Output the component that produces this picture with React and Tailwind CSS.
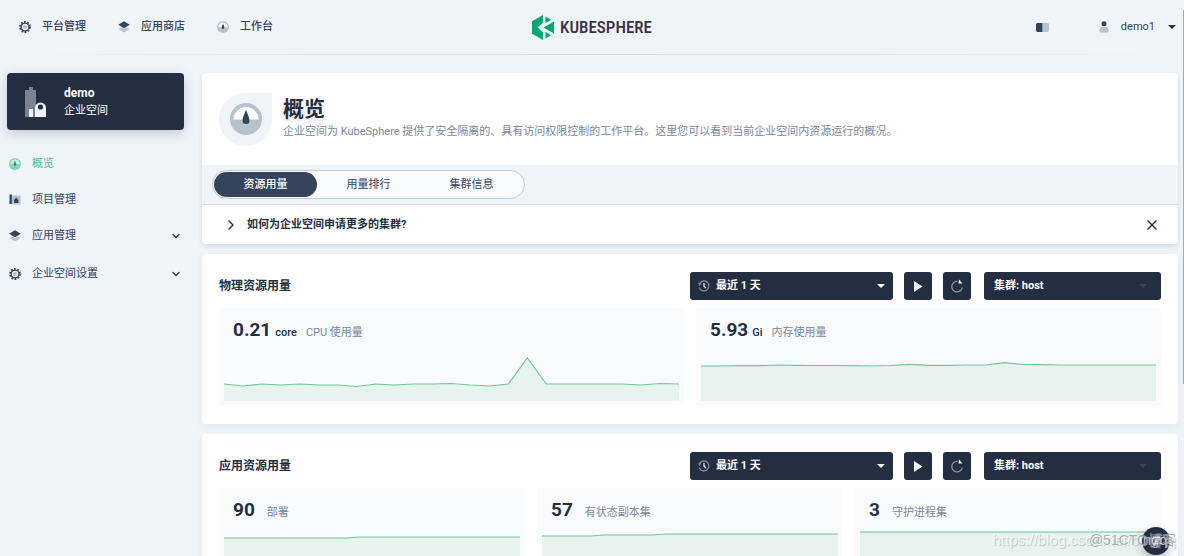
import { useState } from "react";
import clsx from "clsx";
import { ChevronDown, ChevronRight, X } from "lucide-react";

const cpuUsage = [17, 15, 17, 16, 17, 16, 16, 14.5, 17, 16, 17, 17, 17.5, 16, 15, 17, 43, 17, 17, 17, 17, 17, 16, 17.5, 17];
const memoryUsage = [35, 35, 35.3, 35.3, 36, 35.7, 35.5, 35.5, 35.3, 35, 35.5, 36.7, 35.7, 35.7, 36, 36, 38.3, 36.5, 36.3, 36, 36, 36, 36, 36, 36];
const deployments = [43, 43, 43, 43, 43, 43, 43, 43, 43, 43, 43, 44, 44, 44, 44, 44, 44, 44, 44, 44, 44, 44, 44, 44, 44];
const statefulSets = [45, 45, 45, 45, 45, 46, 46, 46, 46, 46, 47, 47, 47, 47, 47, 47, 47, 47, 47, 47, 47, 47, 47, 47, 47];
const daemonSets = [49, 49, 49, 49, 49, 49, 49, 49, 49, 49, 49, 49, 49, 49, 49, 49, 49, 49, 49, 49, 49, 49, 49, 49, 49];

const tabs = ["资源用量", "用量排行", "集群信息"];

function GearIcon() {
  return (
    <svg viewBox="0 0 12 12" className="size-3 shrink-0">
      <circle cx="6" cy="6" r="5" fill="none" stroke="#324558" strokeWidth="1.8" strokeDasharray="1.8 1.34" />
      <circle cx="6" cy="6" r="3.9" fill="#eff4f9" stroke="#324558" strokeWidth="1.3" />
      <circle cx="6" cy="6" r="1.9" fill="#b6c2cd" />
    </svg>
  );
}

function LayersIcon() {
  return (
    <svg viewBox="0 0 12 12" className="size-3 shrink-0">
      <path d="M0.4 8 3.2 6.5 6 8 8.800 6.500 11.600 8 6 11.400Z" fill="#b6c2cd" />
      <path d="M6 0.300 11.800 3.700 6 7.200 0.200 3.700Z" fill="#324558" />
    </svg>
  );
}

function GaugeIcon({ className, ring = "#b6c2cd", needle = "#324558", face = "#fff" }) {
  return (
    <svg viewBox="0 0 32 32" className={className}>
      <circle cx="16" cy="16" r="16" fill={ring} />
      <path d="M3.500 16.500a12.500 12.500 0 0 1 25 0Z" fill={face} />
      <path d="M16 6.500c.9 3.600 3.500 7.500 3.500 11a3.500 3.500 0 0 1-7 0c0-3.500 2.600-7.400 3.500-11Z" fill={needle} />
    </svg>
  );
}

function ProjectIcon() {
  return (
    <svg viewBox="0 0 12 12" className="size-3 shrink-0">
      <path d="M2.500 1.500h9v9h-9z" fill="#b6c2cd" />
      <path d="M0.500 0.500h2.300v9.500h-2.300z" fill="#324558" />
      <path d="M5 9V6l2.200-2.500L9.400 6v3z" fill="#324558" />
    </svg>
  );
}

function WorkspaceIcon() {
  return (
    <svg viewBox="0 0 22 30" className="h-[30px] w-[22px] shrink-0">
      <path d="M4 0h4v3h3v27H0V3h4z" fill="#7c828e" />
      <path d="M10 30V21a5.500 5.500 0 0 1 11 0v9z" fill="#eff4f9" />
      <path d="M4 22h4v8H4z" fill="#eff4f9" />
      <circle cx="15.500" cy="20" r="2.600" fill="#242e42" />
    </svg>
  );
}

function Logo() {
  return (
    <a href="#" className="flex items-center gap-[6px]">
      <svg viewBox="0 0 22 25" className="h-[25px] w-[22px]">
        <path d="M11 0v7.800L5.500 12.500 11 17.200V25L0 18.700V6.300Z" fill="#00a971" />
        <path d="M13.500 1.500 19 4.700 13.500 8.200Z" fill="#00a971" />
        <path d="M13.500 16.800 19 20.300 13.500 23.500Z" fill="#00a971" />
        <path d="M22 6.500v12L11.500 12.500Z" fill="#00a971" />
      </svg>
      <span className="font-['Liberation_Sans_Narrow','Roboto_Condensed',Roboto,sans-serif] text-[17px] leading-5 font-medium text-[#3a3048]">
        KUBESPHERE
      </span>
    </a>
  );
}

function Caret({ className }) {
  return (
    <svg viewBox="0 0 8 4" className={clsx("h-1 w-2", className)}>
      <path d="M0 0h8L4 4z" fill="currentColor" />
    </svg>
  );
}

function Header() {
  return (
    <header>
      <div className="grid h-[54px] grid-cols-[1fr_auto_1fr] items-center">
        <nav className="flex items-center gap-8 pl-[19px] font-medium">
          <a href="#" className="flex items-center gap-[11px]"><GearIcon />平台管理</a>
          <a href="#" className="flex items-center gap-[11px]"><LayersIcon />应用商店</a>
          <a href="#" className="flex items-center gap-[11px]"><GaugeIcon className="size-3" />工作台</a>
        </nav>
        <Logo />
        <div className="flex items-center justify-end pr-2">
          <button type="button" aria-label="文档" className="mr-[50px]">
            <svg viewBox="0 0 13 9" className="h-[9px] w-[13px]">
              <path d="M0 1l1-1h5.500v9H1L0 8z" fill="#324558" />
              <path d="M7 0h5l1 1v7l-1 1H7z" fill="#b6c2cd" />
            </svg>
          </button>
          <button type="button" className="flex items-center">
            <svg viewBox="0 0 10 12" className="mr-3 h-3 w-[10px]">
              <path d="M0.500 10V9c0-2 1.500-3 3-3h3c1.500 0 3 1 3 3v1c0 1-1 1.500-1.500 1.500h-6C1 11.500.500 11 .500 10Z" fill="#b6c2cd" />
              <circle cx="5" cy="2.800" r="2.500" fill="#324558" />
            </svg>
            demo1
            <Caret className="ml-[13px] text-[#242e42]" />
          </button>
        </div>
      </div>
      <div className="h-px bg-linear-to-r from-transparent via-[#d5dbe2] to-transparent" />
    </header>
  );
}

function Sidebar() {
  return (
    <aside className="w-[177px] shrink-0">
      <div className="flex h-[57px] items-center gap-[17px] rounded-sm bg-[#242e42] pl-[18px] text-white shadow-[0_4px_12px_rgba(36,46,66,0.2)]">
        <WorkspaceIcon />
        <div>
          <p className="text-[12px] leading-[18px] font-bold">demo</p>
          <p className="leading-[18px]">企业空间</p>
        </div>
      </div>
      <ul className="mt-4">
        <li>
          <a href="#" className="flex h-9 items-center gap-[11px] pl-[2px] text-[#55bc8a]">
            <GaugeIcon className="size-3" ring="#7fd6b0" needle="#00aa72" face="#c9eedd" />
            概览
          </a>
        </li>
        <li>
          <a href="#" className="flex h-9 items-center gap-[11px] pl-[2px]"><ProjectIcon />项目管理</a>
        </li>
        <li className="mb-[2px]">
          <button type="button" className="flex h-9 w-full items-center gap-[11px] pr-[2px] pl-[2px]">
            <LayersIcon />
            应用管理
            <ChevronDown className="ml-auto size-3" strokeWidth={3} />
          </button>
        </li>
        <li>
          <button type="button" className="flex h-9 w-full items-center gap-[11px] pr-[2px] pl-[2px]">
            <GearIcon />
            企业空间设置
            <ChevronDown className="ml-auto size-3" strokeWidth={3} />
          </button>
        </li>
      </ul>
    </aside>
  );
}

function Banner() {
  const [activeTab, setActiveTab] = useState("资源用量");
  const [showTip, setShowTip] = useState(true);

  return (
    <section className="overflow-hidden rounded bg-white shadow-[0_2px_4px_rgba(36,46,66,0.14)]">
      <div className="flex h-[92px] items-center gap-[11px] px-[17px]">
        <div className="flex size-[53px] shrink-0 items-center justify-center rounded-full rounded-tr-none bg-[#eff4f9]">
          <GaugeIcon className="size-8" />
        </div>
        <div className="pb-[2px]">
          <h1 className="text-[21px] leading-7 font-bold text-[#242e42] text-shadow-[0_3px_4px_rgba(36,46,66,0.16)]">概览</h1>
          <p className="leading-[18px] text-[#79879c]">
            企业空间为 KubeSphere 提供了安全隔离的、具有访问权限控制的工作平台。这里您可以看到当前企业空间内资源运行的概况。
          </p>
        </div>
      </div>
      <div className="border-b border-[#d8dfe8] bg-[#eff4f9] px-[10px] py-[5px]">
        <div className="inline-flex rounded-full border border-[#c1c9d1] bg-[#f9fbfd] p-px align-top">
          {tabs.map((tab) => (
            <button
              key={tab}
              type="button"
              onClick={() => setActiveTab(tab)}
              className={clsx(
                "h-[25px] w-[103px] rounded-full",
                activeTab === tab && "bg-[#36435c] font-medium text-white"
              )}
            >
              {tab}
            </button>
          ))}
        </div>
      </div>
      {showTip && (
        <div className="flex h-[39px] items-center justify-between pr-[18px] pl-[21px] text-[#242e42]">
          <button type="button" className="flex items-center gap-2 font-bold">
            <ChevronRight className="size-4" />
            如何为企业空间申请更多的集群?
          </button>
          <button type="button" aria-label="关闭" onClick={() => setShowTip(false)}>
            <X className="size-4" />
          </button>
        </div>
      )}
    </section>
  );
}

function Toolbar() {
  return (
    <div className="flex items-center gap-[11px] text-white">
      <div className="relative">
        <svg viewBox="0 0 12 12" className="pointer-events-none absolute top-2 left-2 size-3" fill="none">
          <path d="M1.300 4A5 5 0 1 1 1.200 7.600" stroke="#8c929d" strokeWidth="1.200" />
          <path d="M0 3.300h3.200L1.500 6z" fill="#8c929d" />
          <path d="M6 3v3.200l2 1.800" stroke="#fff" strokeWidth="1.200" />
        </svg>
        <select aria-label="时间范围" className="h-7 w-[203px] appearance-none rounded-[3px] bg-[#242e42] pl-[26px] font-bold">
          <option>最近 1 天</option>
        </select>
        <Caret className="pointer-events-none absolute top-3 right-2" />
      </div>
      <button type="button" aria-label="开始" className="flex size-7 items-center justify-center rounded-[3px] bg-[#242e42]">
        <svg viewBox="0 0 10 12" className="h-3 w-[10px]">
          <path d="M1 1v11l8.500-5.500z" fill="#eff4f9" />
        </svg>
      </button>
      <button type="button" aria-label="刷新" className="flex size-7 items-center justify-center rounded-[3px] bg-[#242e42]">
        <svg viewBox="0 0 14 14" className="size-[14px]" fill="none">
          <path d="M7.500 2.300A5.300 5.300 0 1 0 12.300 8.500" stroke="#8c929d" strokeWidth="1.300" />
          <path d="M9 0.500 12.500 4.500H8.500z" fill="#eff4f9" />
        </svg>
      </button>
      <div className="relative ml-[2px]">
        <select aria-label="集群" className="h-7 w-[177px] appearance-none rounded-[3px] bg-[#242e42] pl-[10px] font-bold">
          <option>集群: host</option>
        </select>
        <Caret className="pointer-events-none absolute top-3 right-[14px] text-[#36475a]" />
      </div>
    </div>
  );
}

function AreaChart({ data }) {
  const points = data.map((value, i) => `${(i * 456) / (data.length - 1)},${56 - value}`).join(" ");

  return (
    <svg viewBox="0 0 456 56" preserveAspectRatio="none" className="block h-14 w-full">
      <polygon points={`0,56 ${points} 456,56`} fill="#e8f3ef" />
      <polyline points={points} fill="none" stroke="#6fc79c" strokeWidth="1.200" vectorEffect="non-scaling-stroke" />
    </svg>
  );
}

function Metric({ value, unit, label, data }) {
  return (
    <div className="rounded-[3px] bg-[#f9fbfd] px-[5px] pt-3 pb-[5px]">
      <p className="mb-[5px] flex h-5 items-baseline pl-[9px] leading-5 text-[#242e42]">
        <span className="text-[19px] font-bold">{value}</span>
        {unit && <span className="ml-1 font-medium">{unit}</span>}
        <span className={clsx("text-[#79879c]", unit ? "ml-[9px]" : "ml-3")}>{label}</span>
      </p>
      <AreaChart data={data} />
    </div>
  );
}

function UsageCard({ title, className, children }) {
  return (
    <section className="rounded bg-white px-[17px] py-[18px] shadow-[0_4px_8px_rgba(36,46,66,0.06)]">
      <div className="mb-2 flex items-center justify-between">
        <h2 className="text-[12px] leading-5 font-bold text-[#242e42]">{title}</h2>
        <Toolbar />
      </div>
      <div className={clsx("grid gap-3", className)}>{children}</div>
    </section>
  );
}

export default function App() {
  return (
    <div className="relative h-screen overflow-hidden bg-[#eff4f9] font-[Roboto,'Noto_Sans_CJK_SC',sans-serif] text-[11px] leading-4 text-[#36435c]">
      <Header />
      <div className="flex gap-[18px] pt-[18px] pr-[6px] pl-[7px]">
        <Sidebar />
        <main className="flex min-w-0 flex-1 flex-col gap-[10px]">
          <Banner />
          <UsageCard title="物理资源用量" className="grid-cols-2">
            <Metric value="0.21" unit="core" label="CPU 使用量" data={cpuUsage} />
            <Metric value="5.93" unit="Gi" label="内存使用量" data={memoryUsage} />
          </UsageCard>
          <UsageCard title="应用资源用量" className="grid-cols-3">
            <Metric value="90" label="部署" data={deployments} />
            <Metric value="57" label="有状态副本集" data={statefulSets} />
            <Metric value="3" label="守护进程集" data={daemonSets} />
          </UsageCard>
        </main>
      </div>

      <div className="absolute top-[10px] right-0 h-[374px] w-px bg-[#a8a8a8]" />

      <button
        type="button"
        aria-label="工具箱"
        className="absolute right-[14px] bottom-px flex size-7 items-center justify-center rounded-full bg-[#242e42] shadow-[0_4px_8px_rgba(36,46,66,0.3)]"
      >
        <svg viewBox="0 0 14 14" className="size-[14px]" fill="none">
          <path d="M4 3.500 10 3l1 2.500M8.500 4 5 12" stroke="#eff4f9" strokeWidth="2" />
        </svg>
      </button>
      <div className="pointer-events-none absolute right-2 bottom-[6px] font-['Liberation_Sans','Noto_Sans_CJK_SC',sans-serif] text-[14px] leading-5 whitespace-nowrap">
        <span className="absolute right-0 bottom-0 text-[15px] text-white/70 text-shadow-[1px_1px_1px_rgba(0,0,0,0.2)]">https://blog.csdn.net/bingqq</span>
        <span className="relative text-[#9a9fa5]/80 text-shadow-[1px_1px_1px_rgba(255,255,255,0.6)]">@51CTO博客</span>
      </div>
    </div>
  );
}
